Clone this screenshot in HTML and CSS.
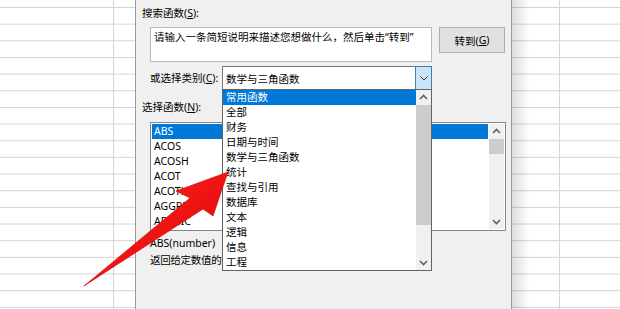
FILE: index.html
```html
<!DOCTYPE html>
<html lang="zh-CN">
<head>
    <meta charset="UTF-8">
    <title>插入函数</title>
    <link rel="stylesheet" href="styles.css">
</head>
<body>
    <div class="screen">
        <div class="sheet sheet-left"></div>

        <div class="dialog">
            <div class="label">搜索函数(<u>S</u>):</div>
            <div class="search-row">
                <div class="search-box">请输入一条简短说明来描述您想做什么，然后单击“转到”</div>
                <div class="btn">转到(<u>G</u>)</div>
            </div>

            <div class="cat-row">
                <span class="cat-label">或选择类别(<u>C</u>):</span>
                <div class="select">
                    <span class="select-text">数学与三角函数</span>
                    <span class="select-btn">
                        <svg width="14" height="22" viewBox="0 0 14 22"><polyline points="3.5,9.5 7,13 10.5,9.5" fill="none" stroke="#333" stroke-width="1"/></svg>
                    </span>
                </div>
            </div>

            <div class="label fn-label">选择函数(<u>N</u>):</div>
            <div class="fn-list">
                <div class="items">
                    <div class="item sel">ABS</div>
                    <div class="item">ACOS</div>
                    <div class="item">ACOSH</div>
                    <div class="item">ACOT</div>
                    <div class="item">ACOTH</div>
                    <div class="item">AGGREGATE</div>
                    <div class="item">ARABIC</div>
                </div>
                <div class="scrollbar">
                    <div class="sb-btn"><svg width="15" height="15" viewBox="0 0 15 15"><polyline points="4,9 7.5,5.5 11,9" fill="none" stroke="#606060" stroke-width="1.6"/></svg></div>
                    <div class="sb-thumb fn-thumb"></div>
                    <div class="sb-track"></div>
                    <div class="sb-btn"><svg width="15" height="15" viewBox="0 0 15 15"><polyline points="4,6 7.5,9.5 11,6" fill="none" stroke="#606060" stroke-width="1.6"/></svg></div>
                </div>
            </div>

            <div class="sig">ABS(number)</div>
            <!-- only the start of the description shows beside the open dropdown -->
            <div class="desc">返回给定数值的</div>

            <!-- open category dropdown -->
            <div class="dropdown">
                <div class="items">
                    <div class="item sel">常用函数</div>
                    <div class="item">全部</div>
                    <div class="item">财务</div>
                    <div class="item">日期与时间</div>
                    <div class="item">数学与三角函数</div>
                    <div class="item">统计</div>
                    <div class="item">查找与引用</div>
                    <div class="item">数据库</div>
                    <div class="item">文本</div>
                    <div class="item">逻辑</div>
                    <div class="item">信息</div>
                    <div class="item">工程</div>
                </div>
                <div class="scrollbar">
                    <div class="sb-btn"><svg width="15" height="15" viewBox="0 0 15 15"><polyline points="4,9 7.5,5.5 11,9" fill="none" stroke="#606060" stroke-width="1.6"/></svg></div>
                    <div class="sb-thumb dd-thumb"></div>
                    <div class="sb-track"></div>
                    <div class="sb-btn"><svg width="15" height="15" viewBox="0 0 15 15"><polyline points="4,6 7.5,9.5 11,6" fill="none" stroke="#606060" stroke-width="1.6"/></svg></div>
                </div>
            </div>
        </div>

        <div class="sheet sheet-right"></div>

        <svg class="arrow" width="620" height="309" viewBox="0 0 620 309">
            <defs>
                <linearGradient id="red" x1="0" y1="0" x2="1" y2="1">
                    <stop offset="0" stop-color="#ff2a2a"/>
                    <stop offset="1" stop-color="#e00000"/>
                </linearGradient>
            </defs>
            <polygon points="84,286 190,198 176,191 228,172 213,216 203,209" fill="url(#red)" stroke="#c80000" stroke-width="0.6" stroke-linejoin="round"/>
        </svg>
    </div>
</body>
</html>
```

FILE: styles.css
```css
* {
    box-sizing: border-box;
}

body {
    margin: 0;
    font-family: "Noto Sans", "Noto Sans CJK SC", sans-serif;
    font-size: 10.5px;
    color: #000;
}

u {
    text-decoration-thickness: 1px;
    text-underline-offset: 1px;
}

.screen {
    position: relative;
    display: flex;
    width: 620px;
    height: 309px;
    overflow: hidden;
    background: #fff;
}

/* spreadsheet behind the dialog */
.sheet {
    height: 100%;
    background-color: #fff;
    background-image: linear-gradient(#d4d4d4 1px, transparent 1px);
    background-size: 100% 16.667px;
    background-position: 0 7px;
}

.sheet-left {
    width: 135px;
    background-image:
        linear-gradient(to right, transparent 113px, #d4d4d4 113px, #d4d4d4 114px, transparent 114px),
        linear-gradient(#d4d4d4 1px, transparent 1px);
    background-size: 100% 100%, 100% 16.667px;
    background-position: 0 0, 0 7px;
}

.sheet-right {
    flex: 1;
    background-image:
        linear-gradient(to right, rgba(0, 0, 0, 0.13), rgba(0, 0, 0, 0) 18px),
        linear-gradient(to right, transparent 47px, #d4d4d4 47px, #d4d4d4 48px, transparent 48px),
        linear-gradient(#d4d4d4 1px, transparent 1px);
    background-size: 100% 100%, 100% 100%, 100% 16.667px;
    background-position: 0 0, 0 0, 0 7px;
}

/* dialog */
.dialog {
    position: relative;
    width: 377px;
    height: 100%;
    padding: 5px 0 0 6px;
    background: #f0f0f0;
    border-left: 1px solid #9a9a9a;
    border-right: 1px solid #9a9a9a;
}

.label {
    line-height: 16px;
}

.search-row {
    display: flex;
    gap: 7px;
    margin: 6px 0 0 8px;
}

.search-box {
    width: 282px;
    height: 35px;
    padding: 2px 3px;
    line-height: 15px;
    background: #fff;
    border: 1px solid #b9b9b9;
    white-space: nowrap;
}

.btn {
    display: flex;
    align-items: center;
    justify-content: center;
    width: 66px;
    height: 26px;
    background: #e1e1e1;
    border: 1px solid #adadad;
}

.cat-row {
    display: flex;
    align-items: center;
    height: 24px;
    margin: 4px 0 0 8px;
}

.cat-label {
    width: 72px;
    flex: none;
    line-height: 16px;
}

.select {
    display: flex;
    align-items: center;
    width: 210px;
    height: 24px;
    background: #fff;
    border: 1px solid #7a7a7a;
}

.select-text {
    flex: 1;
    padding-left: 3px;
}

.select-btn {
    display: flex;
    align-items: center;
    justify-content: center;
    width: 17px;
    height: 24px;
    margin: -1px -1px -1px 0;
    background: #cce4f7;
    border: 1px solid #3c7fb1;
}

.fn-label {
    margin-top: 9px;
}

/* list boxes */
.fn-list {
    display: flex;
    gap: 1px;
    width: 356px;
    height: 109px;
    margin: 7px 0 0 8px;
    padding: 1px;
    background: #fff;
    border: 1px solid #828790;
}

.items {
    flex: 1;
}

.item {
    height: 15px;
    line-height: 15px;
    padding-left: 2px;
    white-space: nowrap;
}

.item.sel {
    background: #0078d7;
    color: #fff;
}

.scrollbar {
    display: flex;
    flex-direction: column;
    width: 15px;
    background: #f0f0f0;
}

.sb-btn {
    height: 15px;
    flex: none;
}

.sb-btn svg {
    display: block;
}

.sb-thumb {
    background: #cdcdcd;
    flex: none;
}

.fn-thumb {
    height: 15px;
}

.dd-thumb {
    height: 120px;
}

.sb-track {
    flex: 1;
}

.sig {
    margin: 4px 0 0 8px;
    line-height: 17px;
}

.desc {
    margin-left: 8px;
    line-height: 17px;
    letter-spacing: -0.3px;
    white-space: nowrap;
}

.dropdown {
    position: absolute;
    left: 86px;
    top: 89px;
    display: flex;
    width: 210px;
    height: 182px;
    background: #fff;
    border: 1px solid #646464;
}

.dropdown .item {
    padding-left: 3px;
}

.arrow {
    position: absolute;
    left: 0;
    top: 0;
    pointer-events: none;
}
```
